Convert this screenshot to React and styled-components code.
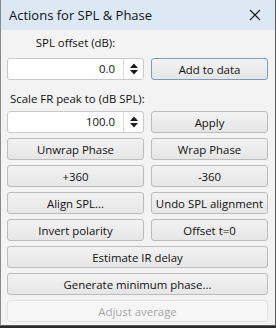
import React from 'react';
import styled, { createGlobalStyle } from 'styled-components';

const Global = createGlobalStyle`
  html, body {
    margin: 0;
    padding: 0;
    background: #2b2b2b;
  }
  body {
    font-family: "Open Sans", "Noto Sans", "Liberation Sans", sans-serif;
  }
`;

function Arrows() {
  return (
    <svg width="10" height="14" viewBox="0 0 10 14">
      <path d="M1 6 L5 1.5 L9 6 Z" fill="#1a1a1a" />
      <path d="M1 8 L5 12.5 L9 8 Z" fill="#1a1a1a" />
    </svg>
  );
}

function CloseIcon() {
  return (
    <svg width="12" height="12" viewBox="0 0 12 12">
      <path d="M1 1 L11 11 M11 1 L1 11" stroke="#111" strokeWidth="1.1" />
    </svg>
  );
}

function SpinBox({ value }) {
  return (
    <Spin>
      <SpinValue>{value}</SpinValue>
      <SpinArrows>
        <Arrows />
      </SpinArrows>
    </Spin>
  );
}

function App() {
  return (
    <>
      <Global />
      <Window>
        <TitleBar>
          <Title>Actions for SPL &amp; Phase</Title>
          <CloseBtn>
            <CloseIcon />
          </CloseBtn>
        </TitleBar>
        <Body>
          <Label center>SPL offset (dB):</Label>
          <span />
          <SpinBox value="0.0" />
          <Button focused>Add to data</Button>
          <Label>Scale FR peak to (dB SPL):</Label>
          <span />
          <SpinBox value="100.0" />
          <Button>Apply</Button>
          <Button>Unwrap Phase</Button>
          <Button>Wrap Phase</Button>
          <Button>+360</Button>
          <Button>-360</Button>
          <Button>Align SPL...</Button>
          <Button>Undo SPL alignment</Button>
          <Button>Invert polarity</Button>
          <Button>Offset t=0</Button>
          <Button wide>Estimate IR delay</Button>
          <Button wide>Generate minimum phase...</Button>
          <Button wide disabled>Adjust average</Button>
        </Body>
      </Window>
    </>
  );
}

export default App;

const Window = styled.div`
  width: 274px;
  height: 325px;
  background: #f3f3f3;
  border-right: 1px solid #5a5a5a;
  border-bottom: 1px solid #5a5a5a;
  border-left: 1px solid #8a8a8a;
  display: flex;
  flex-direction: column;
  box-sizing: content-box;
`;

const TitleBar = styled.div`
  height: 30px;
  background: #dde8f5;
  display: flex;
  align-items: center;
  justify-content: space-between;
  padding: 0 14px 0 8px;
`;

const Title = styled.div`
  font-size: 13px;
  color: #111;
`;

const CloseBtn = styled.div`
  display: flex;
  align-items: center;
`;

const Body = styled.div`
  display: grid;
  grid-template-columns: 137px 117px;
  grid-template-rows: 21px 22px 21px 22px;
  grid-auto-rows: 22px;
  column-gap: 7px;
  row-gap: 5px;
  padding: 2px 0 0 6px;
`;

const Label = styled.div`
  grid-column: 1 / 2;
  font-size: 11.4px;
  color: #111;
  display: flex;
  align-items: ${(p) => (p.center ? 'center' : 'flex-end')};
  justify-content: ${(p) => (p.center ? 'center' : 'flex-start')};
  padding-left: ${(p) => (p.center ? '0' : '3px')};
  white-space: nowrap;
`;

const Spin = styled.div`
  display: flex;
  background: #fff;
  border: 1px solid #c9c9c9;
  border-radius: 3px;
  box-sizing: border-box;
  height: 22px;
`;

const SpinValue = styled.div`
  flex: 1;
  font-size: 11.4px;
  color: #111;
  text-align: right;
  padding-right: 8px;
  line-height: 20px;
  border-right: 1px solid #dcdcdc;
`;

const SpinArrows = styled.div`
  width: 19px;
  display: flex;
  align-items: center;
  justify-content: center;
`;

const Button = styled.div`
  grid-column: ${(p) => (p.wide ? '1 / 3' : 'auto')};
  box-sizing: border-box;
  height: 22px;
  border: 1px solid ${(p) => (p.disabled ? '#e1e1e1' : p.focused ? '#7a9cc4' : '#bcbcbc')};
  border-radius: 3px;
  background: ${(p) =>
    p.disabled ? '#f6f6f6' : 'linear-gradient(#f2f2f2, #e6e6e6)'};
  color: ${(p) => (p.disabled ? '#a8a8a8' : '#111')};
  font-size: 11.4px;
  display: flex;
  align-items: center;
  justify-content: center;
  white-space: nowrap;
`;
